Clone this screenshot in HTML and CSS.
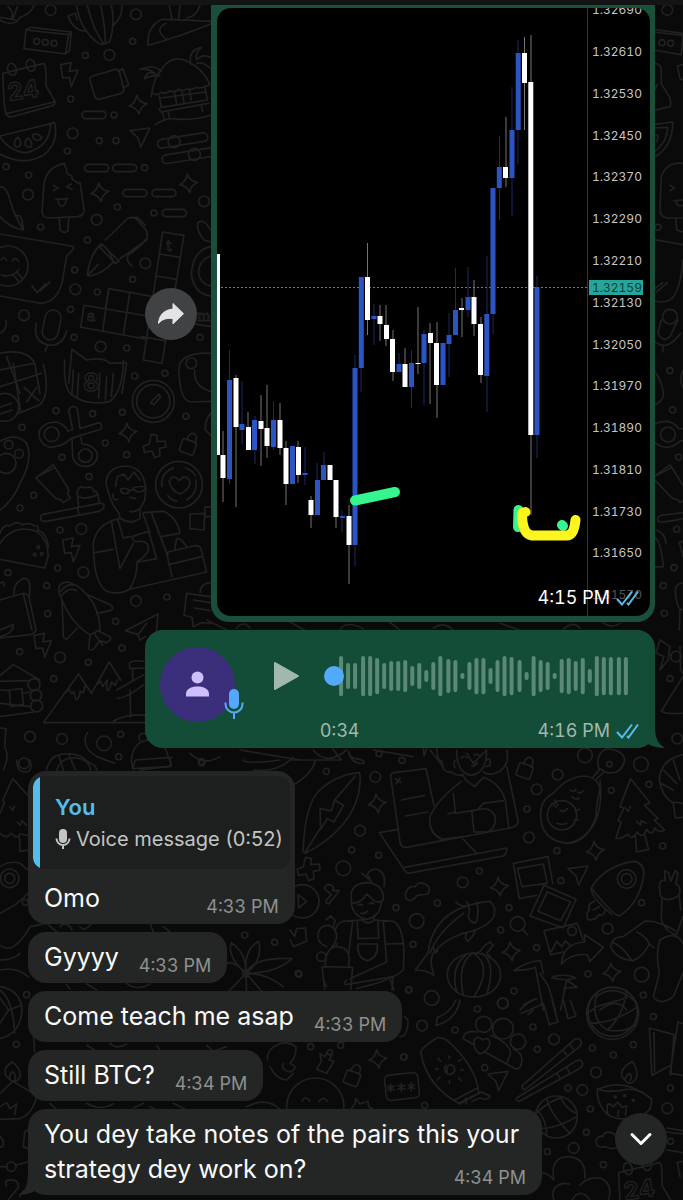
FILE: index.html
```html
<!DOCTYPE html>
<html lang="en">
<head>
    <meta charset="UTF-8">
    <meta name="viewport" content="width=device-width, initial-scale=1">
    <title>Chat</title>
    <link rel="stylesheet" href="styles.css">
</head>
<body>
    <div class="chat">
        <svg class="wallpaper" viewBox="0 0 683 1200" preserveAspectRatio="xMidYMin slice" aria-hidden="true">
            <defs>
                <path id="bolt" d="M-24 -30L8 -36L2 -10L28 -14L8 36L2 8L-18 10Z"/>
                <path id="star" d="M-4 -28Q2 -6 27 -3Q6 6 3 28Q-4 8 -27 4Q-8 -4 -4 -28Z"/>
                <path id="cross" d="M-10 -34L8 -30L6 -12L32 -14L34 4L14 8L16 30L0 36L-8 16L-30 20L-34 2L-16 -6Z"/>
                <path id="send" d="M-28 -24L32 -32L4 26L-4 -2Z"/>
                <g id="lock"><rect x="-24" y="-14" width="44" height="40" rx="6" transform="rotate(20)"/><path d="M-8 -16Q2 -44 18 -32Q26 -26 16 -6"/></g>
                <g id="calendar"><path d="M-62 -28L62 -58Q70 -50 68 10L94 54Q98 62 90 68L-40 104Q-54 100 -58 60Z M-54 94L92 58"/><ellipse cx="-34" cy="-40" rx="13" ry="18" transform="rotate(-15 -34 -40)"/><ellipse cx="22" cy="-52" rx="13" ry="18" transform="rotate(-15 22 -52)"/><text x="-50" y="48" transform="rotate(-8)" class="doodle-num">24</text></g>
                <g id="toothpaste"><path d="M-52 -26L0 -66L44 4Q48 14 42 22L52 34L30 48L22 38Q10 40 4 32Z M-44 -32L6 -58"/></g>
                <path id="ring" d="M-16 0A16 16 0 1 0 16 0A16 16 0 1 0 -16 0"/>
                <path id="dot" d="M-9 0A9 9 0 1 0 9 0A9 9 0 1 0 -9 0"/>
            </defs>

            <!-- top left -->
            <g transform="scale(.3333)">
                <path d="M0 60Q20 76 50 66L60 52Q90 44 102 16M0 52L48 60M24 20Q44 40 34 56M52 20L40 54"/>
                <path d="M230 16Q240 90 296 130Q310 138 330 124Q346 70 334 16M262 16Q280 90 310 130M302 16Q316 80 316 128M204 48Q220 90 254 94M204 48L226 40L232 60M340 76Q368 50 366 16"/>
                <path d="M444 136Q440 80 486 58Q560 60 632 64M444 136Q540 110 632 72M498 70Q460 90 500 118M508 16L516 58M540 16L536 56M600 16Q590 50 560 54"/>
                <path d="M78 90L206 104L196 162L72 146Z M78 90L94 82L214 96L206 104M214 96L208 152L196 162"/>
                <use href="#calendar" x="70" y="248"/>
                <use href="#bolt" x="206" y="224"/>
                <path d="M270 240Q266 232 278 228L346 208Q354 206 358 214L372 270Q370 278 364 280L296 298Q286 296 284 288Z M354 214L368 206L386 254L372 264"/>
                <path d="M454 290Q460 220 510 182Q540 170 566 186Q612 210 630 254M456 278Q470 290 484 276Q498 284 510 272Q524 280 536 268Q548 276 562 266Q576 272 588 262Q600 268 626 256M478 288L484 322L622 300L614 258M478 326L482 336L626 310M524 280L530 310M546 276L552 306M568 270L574 300M484 294L616 276M488 338L492 356M504 334L508 352M604 318L608 334M466 374Q500 350 540 358Q590 360 632 346"/>
                <path d="M484 214Q460 190 420 208Q450 204 466 222Q440 210 434 236Q450 226 480 226M572 192Q564 150 604 142Q584 160 590 180Q606 160 632 172M590 190Q610 184 632 206"/>
                <path d="M0 408L164 368Q178 430 130 466Q70 500 0 462M0 410Q30 456 80 458Q150 440 152 372M44 438Q40 420 54 412Q66 426 60 438Q50 444 44 438Z M76 436Q74 420 84 414Q98 426 94 440Q84 446 76 436Z M98 404Q112 396 126 414Q116 424 108 420Q98 416 98 404Z"/>
                <rect x="246" y="334" width="72" height="22" rx="11"/>
                <rect x="254" y="493" width="72" height="22" rx="11"/>
                <rect x="338" y="493" width="72" height="22" rx="11"/>
                <rect x="369" y="568" width="72" height="22" rx="11"/>
                <rect x="456" y="568" width="72" height="22" rx="11"/>
                <rect x="487" y="628" width="72" height="22" rx="11"/>
                <g transform="rotate(-9 550 420)"><rect x="472" y="408" width="152" height="26" rx="13"/><circle cx="522" cy="421" r="18"/><rect x="478" y="456" width="160" height="26" rx="13"/><circle cx="576" cy="468" r="18"/></g>
                <use href="#star" x="414" y="314"/><use href="#star" x="300" y="577"/><use href="#star" x="566" y="550"/>
                <use href="#send" x="418" y="416"/>
                <path d="M194 490Q140 500 132 552L126 636Q128 654 148 654L234 650Q254 646 252 628L240 548Q230 550 226 544Q214 540 216 528Q196 524 200 506Q192 498 194 490Z M178 656L180 690Q192 704 204 692L206 654M160 556L174 564L160 572M214 552L200 560L216 568M168 598L204 596M174 600Q176 620 188 618Q198 616 198 598"/>
                <path d="M0 560Q20 560 30 600Q40 640 70 690Q30 684 0 650M46 650Q60 640 66 660L70 690"/>
                <path d="M0 702L214 738Q228 742 214 754L200 768L186 850Q168 910 120 910L0 888"/>
                <circle cx="24" cy="798" r="60"/>
                <path d="M4 780Q10 764 20 782M36 784Q44 768 56 784M4 824Q30 836 56 810M40 826L56 844M50 816L68 836M96 858L112 878L136 852M122 872L150 846"/>
                <path d="M262 826Q270 760 304 732Q330 750 340 786Q310 820 270 828Z M264 826L294 794M304 732L358 784L346 790L300 742Z M316 720L384 654Q400 648 410 658L438 690Q444 704 440 720L360 776M390 654L412 652L436 676M440 716Q410 750 384 766Q378 786 396 798"/>
                <path d="M488 696L552 706L520 900M488 696L430 1080L486 1090L500 1000M478 762L542 772M468 828L530 838M252 916L632 980M244 982L440 1018M252 916L242 982M326 866L308 994M326 866L460 890M390 876L370 1004M326 866L316 928M424 1010L496 1022"/>
                <text x="498" y="752" class="doodle-letter">t</text><text x="260" y="964" class="doodle-letter">a</text><text x="590" y="962" class="doodle-letter">m</text>
                <path d="M632 690Q612 654 594 668Q588 690 612 720L632 726M632 740Q580 750 574 820Q580 880 632 888M632 768Q596 780 596 820Q600 850 632 858"/>
                <g transform="rotate(12 156 970)"><rect x="132" y="930" width="48" height="90" rx="24"/><path d="M110 980Q110 1034 156 1036Q200 1034 204 984M156 1036L154 1056"/></g>
                <path d="M0 1000Q22 990 18 962M0 1060Q80 1044 104 1090L120 1180M20 1070L60 1180M0 1110L104 1090M216 1048L260 1080Q310 1070 330 1090L380 1088L366 1180M216 1048L206 1150"/>
                <path d="M540 1090Q560 1056 632 1060M540 1090L536 1110"/>
                <use href="#ring" x="152" y="30"/><use href="#ring" x="408" y="43"/><use href="#ring" x="328" y="165"/><use href="#ring" x="218" y="400"/><use href="#ring" x="84" y="584"/><use href="#ring" x="290" y="659"/><use href="#ring" x="612" y="604"/><use href="#ring" x="436" y="790"/><use href="#ring" x="226" y="868"/><use href="#ring" x="72" y="946"/><use href="#ring" x="302" y="1040"/><use href="#ring" x="574" y="1090"/>
                <use href="#dot" x="256" y="166"/><use href="#dot" x="398" y="124"/><use href="#dot" x="212" y="297"/><use href="#dot" x="342" y="345"/><use href="#dot" x="298" y="422"/><use href="#dot" x="348" y="422"/><use href="#dot" x="202" y="453"/><use href="#dot" x="18" y="500"/><use href="#dot" x="86" y="525"/><use href="#dot" x="434" y="503"/><use href="#dot" x="352" y="621"/><use href="#dot" x="462" y="639"/><use href="#dot" x="122" y="681"/><use href="#dot" x="262" y="720"/><use href="#dot" x="224" y="810"/><use href="#dot" x="398" y="838"/><use href="#dot" x="292" y="876"/><use href="#dot" x="212" y="928"/><use href="#dot" x="46" y="1016"/><use href="#dot" x="222" y="1012"/><use href="#dot" x="380" y="1044"/><use href="#dot" x="600" y="1012"/><use href="#dot" x="110" y="124"/><use href="#dot" x="136" y="127"/><use href="#dot" x="162" y="130"/>
            </g>

            <!-- middle left -->
            <g transform="translate(0 370) scale(.3333)">
                <path d="M0 50L124 10M40 -20L62 128M130 -16Q152 70 120 104L50 132M72 52L116 92M110 52L80 96"/><circle cx="14" cy="112" r="42"/><path d="M0 112L34 100M0 132L36 120"/>
                <path d="M194 -30Q190 50 212 72Q260 110 330 94Q370 60 370 -30M220 0L216 70M236 10L232 80M300 10L296 84M320 20L316 90M340 10L334 80"/>
                <text x="250" y="62" class="doodle-num">8</text>
                <circle cx="460" cy="94" r="63"/><circle cx="460" cy="94" r="50"/><path d="M452 98L476 72L482 80L462 104Z"/>
                <path d="M536 0Q540 90 570 96L632 94M584 0Q580 50 632 64M632 130Q614 150 616 180L632 196"/>
                <path d="M206 120Q218 100 232 116L240 176L296 158Q310 162 302 178L212 206Q190 230 150 232Q114 222 118 184Q130 156 170 156Q196 164 204 184L218 178Z M216 206L218 262Q226 290 260 290Q294 284 292 250Q280 224 246 222L242 196"/>
                <circle cx="155" cy="193" r="22"/><circle cx="256" cy="257" r="20"/>
                <use href="#star" x="384" y="187"/><use href="#cross" x="464" y="227"/><use href="#lock" x="568" y="226"/>
                <path d="M0 214Q50 186 80 220Q100 270 60 340Q40 390 0 420"/><circle cx="18" cy="280" r="30"/><circle cx="26" cy="224" r="13"/><circle cx="57" cy="251" r="13"/>
                <use href="#toothpaste" x="160" y="350"/>
                <path d="M126 434L298 400Q314 398 312 410Q310 420 298 424L138 454Q120 456 122 442Z M232 412L236 430M236 410L232 372Q230 354 246 350L254 354Q280 346 282 364Q292 364 294 374L298 400M236 380Q260 390 292 374"/>
                <path d="M318 340Q322 290 376 288Q420 290 432 330L438 354L434 390Q420 430 390 424M318 340Q330 400 358 430L360 444Q390 466 420 446L420 420M346 350L352 320L372 312L384 330L402 306L420 330M340 372Q334 380 346 390L354 388M362 358Q378 350 388 362Q384 374 370 370Q362 368 362 358Z M400 354Q424 346 438 352Q432 366 414 366Q402 364 400 354Z M388 362L400 358M390 382L406 386"/>
                <path d="M358 446Q290 460 280 520Q280 640 320 664Q360 676 388 658L620 606L604 540Q600 524 580 528L504 546Q500 556 504 568L516 620M284 548L340 538M334 454L360 596L400 520M354 450L370 504L390 500M428 430L450 490M454 428L504 560M430 428L490 424Q530 440 540 490L484 500M396 500L446 484L470 566L416 576M396 500Q400 520 420 514Q450 514 444 544Q430 566 412 574Q410 630 388 658M506 584L606 560M524 540L530 506Q540 500 560 530"/>
                <circle cx="537" cy="344" r="70"/><path d="M508 332Q520 310 538 332Q556 308 570 334Q570 360 540 372Q510 360 508 332Z M486 350Q480 310 520 294M588 330Q594 370 560 390M504 376Q510 388 530 394M556 294Q580 302 586 318"/>
                <path d="M0 520Q40 460 110 484Q146 510 144 560L134 594L0 568M0 490Q10 460 30 468Q50 450 66 464Q90 456 104 468Q116 464 114 480Q140 490 146 530"/><circle cx="104" cy="554" r="4"/><circle cx="115" cy="532" r="4"/><circle cx="125" cy="552" r="4"/>
                <use href="#bolt" x="212" y="540"/><use href="#bolt" x="126" y="826"/>
                <path d="M570 432L614 430L612 480L570 476Z M616 440L614 412L632 410M614 440L632 440"/>
                <path d="M178 670Q170 636 206 636Q250 650 280 700Q300 740 300 780L270 794Q210 760 178 670Z M182 664Q200 640 218 646M186 676Q206 650 230 662M258 672L334 706Q344 716 330 722L290 730M186 690L190 800Q196 812 204 804L232 774M270 794L266 836Q270 844 282 836L298 812M282 790L308 826M294 782L332 802Q334 812 318 818L298 812"/>
                <path d="M0 690L70 670L86 676L108 780Q106 790 90 794L0 804M70 672L96 780M42 672Q40 640 68 626Q96 620 88 680M0 640Q14 630 12 650M0 780L40 764Q40 790 0 800"/>
                <path d="M560 670L632 680M560 670L552 736L576 742L580 770L604 758L632 760M580 690L632 698M582 714L632 722M600 668Q602 640 632 638"/>
                <path d="M376 782L474 732L466 820M376 782L414 794L440 760M414 794L420 810L436 800"/>
                <path d="M0 916L40 884L120 930M0 934L90 932M0 960L28 962M28 960L66 956L70 1004L32 1010Z M0 1000L90 1010M0 1040L100 1026M66 970L92 966"/><circle cx="102" cy="944" r="18"/><circle cx="108" cy="976" r="17"/><circle cx="110" cy="1008" r="18"/>
                <path d="M130 1058L236 912L274 970L328 876L362 930M192 972Q200 964 208 958Q214 980 222 964Q226 990 230 990Q240 980 240 964L250 968L256 946M290 944L302 934L308 950L322 930Q318 960 322 962Q330 960 334 936L346 946L352 930M130 1058L440 1058M340 1054Q380 1030 440 1036M350 960L432 914M352 984Q370 990 432 944M388 880Q394 870 432 874M388 880L390 896L432 894M398 898L398 930M390 960L392 1040"/>
                <path d="M0 1074L18 1076L14 1130Q30 1160 10 1200M140 1200Q150 1150 200 1152Q260 1150 272 1200M176 1156L190 1200M206 1152L226 1200M262 1088Q240 1130 290 1160L344 1180M394 1170Q400 1110 450 1110Q500 1120 504 1160L512 1176L510 1190L398 1196Z M420 1110Q410 1090 434 1090Q450 1096 440 1110"/>
                <use href="#ring" x="244" y="477"/><use href="#ring" x="250" y="607"/><use href="#ring" x="408" y="693"/><use href="#ring" x="180" y="862"/><use href="#ring" x="90" y="1100"/><use href="#ring" x="186" y="1107"/><use href="#ring" x="72" y="1180"/><circle cx="312" cy="1120" r="22"/>
                <use href="#dot" x="404" y="18"/><use href="#dot" x="495" y="10"/><use href="#dot" x="168" y="122"/><use href="#dot" x="278" y="131"/><use href="#dot" x="367" y="127"/><use href="#dot" x="558" y="139"/><use href="#dot" x="66" y="172"/><use href="#dot" x="316" y="219"/><use href="#dot" x="380" y="254"/><use href="#dot" x="186" y="262"/><use href="#dot" x="267" y="320"/><use href="#dot" x="101" y="376"/><use href="#dot" x="60" y="414"/><use href="#dot" x="180" y="480"/><use href="#dot" x="173" y="594"/><use href="#dot" x="24" y="608"/><use href="#dot" x="140" y="647"/><use href="#dot" x="501" y="681"/><use href="#dot" x="143" y="731"/><use href="#dot" x="347" y="754"/><use href="#dot" x="366" y="834"/><use href="#dot" x="59" y="845"/><use href="#dot" x="265" y="877"/><use href="#dot" x="161" y="926"/><use href="#dot" x="362" y="1093"/><use href="#dot" x="356" y="1160"/><use href="#dot" x="605" y="1175"/>
            </g>

            <!-- right edge -->
            <g transform="translate(440 0) scale(.3333)">
                <use href="#ring" x="682" y="30"/>
                <path d="M640 88L729 100M640 96L729 106M640 150L724 164L729 104"/>
                <use href="#dot" x="666" y="128"/><use href="#dot" x="692" y="130"/>
                <path d="M640 190Q664 190 664 210L664 252L688 290Q696 310 690 320L640 332M652 254L640 276M729 194L712 198L720 236L729 240M640 374L698 366Q700 440 640 474M640 384L684 382Q680 430 640 458M640 404Q660 400 650 426"/>
                <path d="M729 490Q680 484 664 530L660 630Q660 652 684 654L729 654M708 656L710 690L729 696M690 556L704 564L690 572M702 602L729 600M708 606Q712 622 729 616M640 718L729 734M729 780Q720 880 690 900Q660 912 640 900M640 870L668 848M650 876L682 848"/>
                <use href="#dot" x="654" y="682"/><circle cx="690" cy="950" r="22"/>
                <g transform="translate(0 960)">
                    <path d="M664 0L654 40Q670 70 690 50L714 0M640 60Q680 100 722 40M670 78L668 96M640 148Q672 190 670 230Q660 250 640 256"/>
                    <use href="#dot" x="690" y="152"/><use href="#dot" x="698" y="270"/><use href="#dot" x="716" y="412"/><use href="#dot" x="710" y="628"/><use href="#dot" x="702" y="743"/><use href="#dot" x="670" y="797"/><use href="#dot" x="673" y="880"/>
                    <circle cx="684" cy="344" r="22"/><path d="M640 314Q690 290 716 326L729 326M640 364Q680 400 720 364L729 362M729 152Q716 180 729 204"/>
                    <use href="#toothpaste" x="690" y="500"/>
                    <path d="M729 578L664 586Q650 590 654 604Q660 610 729 596M640 650Q664 660 670 740L640 742M650 630Q676 640 678 670M729 664L718 668L729 710M729 790Q700 790 708 830Q712 870 729 870M720 870L718 930"/>
                    <path d="M648 1000L672 1010L660 1050L684 1020L690 980L660 960Z M664 1174L729 1070M664 1174Q680 1184 729 1180M720 980L722 1050L729 1060"/>
                    <use href="#ring" x="708" y="1010"/><use href="#dot" x="690" y="1076"/><use href="#ring" x="712" y="1256"/>
                </g>
            </g>

            <!-- slivers between the bubbles -->
            <g transform="translate(200 600) scale(.3333)">
                <path d="M20 60L80 90M110 84Q130 60 150 84M260 60L330 100M420 88Q440 60 490 86M560 60L600 90M700 84Q730 62 760 90M900 70L960 90M1090 88Q1120 60 1140 84M1200 60Q1230 90 1260 70"/>
                <path d="M-30 460Q10 500 60 470M120 450L300 480M340 450Q380 500 440 450M520 450L640 470M690 450L730 500M800 460L820 490L860 450"/>
            </g>

            <!-- lower right -->
            <g transform="translate(290 740) scale(.3333)">
                <path d="M0 60L154 60L128 26M0 140Q60 110 76 64M176 34Q180 56 200 56Q224 60 222 70Q190 74 178 44Z M400 20L402 48L410 26"/>
                <path d="M208 98Q214 110 206 160Q180 270 46 340Q36 336 40 320Q46 190 90 150Q140 104 208 98Z M46 336L90 266M134 180L196 108M90 206L124 212L134 180L160 196L132 246L112 236L92 268Z"/>
                <path d="M302 110Q300 100 312 98L408 86M302 110L330 306Q334 324 350 322L660 264Q688 258 684 240L650 80M408 86L432 196M316 116L332 128M330 114L318 132M334 180L404 166M346 228L414 216M326 268L268 278L346 394Q352 402 366 398L640 348Q652 340 650 324L344 382M520 298L558 338"/>
                <path d="M500 30Q500 100 544 106Q590 100 590 30M440 26Q440 60 456 64Q456 100 484 96Q500 110 520 104M590 60Q604 50 600 76L588 80M500 60Q488 60 494 82M650 30Q660 70 630 94Q600 110 580 96M514 54Q522 44 532 54M552 46Q562 38 570 50M544 78Q556 80 562 68M520 108L530 122L554 140L580 112M514 124Q440 180 420 230Q414 280 456 298L520 290M490 160L496 216L474 222M496 220L570 208Q600 200 616 230Q618 270 590 276L552 276L546 216M580 112Q630 130 646 180L656 262M562 210L580 190L640 182"/>
                <use href="#star" x="262" y="190"/><use href="#star" x="916" y="332"/><use href="#star" x="628" y="440"/><use href="#star" x="664" y="634" /><use href="#star" x="966" y="697"/>
                <use href="#lock" x="708" y="88"/><use href="#cross" x="56" y="386"/><use href="#send" x="862" y="410"/>
                <path d="M752 220Q752 180 790 160Q830 112 880 108Q926 110 930 150Q920 180 918 230Q890 310 830 310Q750 300 752 220Z M930 120Q940 220 900 270Q870 306 830 310M910 110L930 88M920 116L940 98M926 84Q916 40 950 26Q1000 30 1004 60Q996 104 950 98Z M840 150Q850 160 858 148M864 156Q872 164 880 152M846 170Q856 182 868 174M784 190L800 202M794 180L804 196M856 214L868 208M852 240L866 240"/><circle cx="816" cy="226" r="44"/><path d="M810 210Q820 220 832 206M800 250Q816 256 830 250"/><circle cx="958" cy="73" r="8"/>
                <path d="M1022 116L1080 188L1064 196L1104 236L1092 240L1124 270Q1106 280 1094 264Q1086 292 1070 268Q1058 300 1042 276Q1024 304 1014 282Q990 300 978 294L994 246L984 242L1002 204L990 200Z M1036 288L1040 336L1076 328L1064 284M1006 204L1014 214L1022 200M1040 244L1052 256L1054 242L1068 250"/>
                <path d="M1179 44Q1110 60 1108 120Q1116 170 1150 190L1156 234L1179 232M1120 90L1160 130M1112 130L1150 150M1150 60L1170 120M1152 186L1179 190"/>
                <path d="M670 370L774 350L788 430M670 370L688 476L740 466M682 386L760 372L772 430L696 440Z M762 436L858 478L820 564L720 528Z M772 456L842 486L812 542L744 514Z M762 572L862 550L880 600M762 572L782 644L820 636M784 634L800 604L816 620L826 602L840 616"/><circle cx="846" cy="573" r="13"/>
                <path d="M814 672Q820 610 884 606L884 584L940 622L900 664L892 644Q840 640 814 672Z"/>
                <path d="M904 444Q940 380 1030 364Q1060 366 1062 400Q1050 490 988 528Q970 526 904 444Z M904 444Q900 470 966 524M914 484Q890 490 898 510Q886 520 894 540Q920 540 926 524Q944 530 946 506M910 510L928 500"/><circle cx="1010" cy="417" r="28"/><circle cx="1010" cy="417" r="16"/>
                <path d="M1108 440Q1110 416 1126 422L1124 392L1136 398L1142 424L1156 392L1164 400L1158 432Q1174 440 1168 464Q1140 490 1112 470ZM1116 476L1114 540Q1130 580 1160 584L1179 530M1168 470L1172 510M962 620Q966 590 1000 590L1064 544Q1100 540 1156 572M962 620Q980 660 1030 662Q1060 650 1078 612L1092 624M966 606Q1000 620 1024 660M1040 576Q1070 590 1078 612M1110 600Q1160 570 1179 610M1110 600Q1096 640 1108 700L1090 770Q1110 800 1150 770Q1170 720 1179 700"/>
                <path d="M184 460Q188 430 232 428Q282 432 280 480Q270 490 254 484L230 462Q216 490 184 490Z M184 490Q190 530 230 538Q270 530 274 488M232 404Q240 386 262 388Q290 400 282 440M232 404L244 424L216 400M204 496Q210 490 218 496M238 492Q246 486 252 492M212 520Q222 524 232 514M216 538Q230 556 250 544L252 532"/>
                <path d="M216 540L160 544Q140 550 136 570M188 544L176 640M202 544L204 596L266 594L264 540M254 540L310 544Q340 560 342 640L340 690Q320 710 260 730L200 746M280 544L290 666L180 716M204 612L262 612Q266 650 234 662Q200 656 204 612Z M290 612L342 610M96 680L188 682L182 748M96 680L104 748M106 682Q104 624 140 620Q176 620 178 660L176 680M136 620L142 610M110 620Q80 610 84 580Q90 556 116 556Q140 566 140 590Q138 610 126 620M108 540L122 528L136 542L130 558M300 716L312 750"/><circle cx="94" cy="650" r="14"/>
                <path d="M346 464Q352 436 376 440Q384 422 404 432Q426 440 414 462L382 466Q366 490 348 476Z M104 446Q106 432 120 434Q136 440 128 452L148 452L116 492Q104 490 110 480L124 464Z"/>
                <path d="M376 690L414 640Q430 500 600 484Q620 500 612 530Q590 566 520 580Q460 600 430 640Q416 660 432 706Q410 690 376 690ZM530 484Q544 510 534 530Q548 556 560 544Q568 510 560 486M528 580Q524 600 534 604Q550 590 556 570M498 486Q510 500 528 498M420 640Q440 580 520 520M430 620Q434 650 444 630"/>
                <ellipse cx="552" cy="705" rx="80" ry="66"/><path d="M548 640Q500 670 520 766M552 640Q610 680 552 770M530 642Q480 680 500 756M576 640Q620 670 590 764M556 640Q570 640 580 620L600 606L610 616L590 640Q604 650 600 656"/>
                <path d="M672 692Q710 664 752 662L760 700M672 692Q720 690 736 682L760 810M750 700L776 740L796 810M784 714L830 720L812 810M790 710Q830 700 858 714L830 720L862 742L820 744M690 810Q720 780 740 776"/>
                <circle cx="968" cy="815" r="74"/><path d="M920 770Q970 730 1030 780M930 810Q980 770 1010 810"/>
                <circle cx="37" cy="484" r="50"/><path d="M24 464L50 484L26 504Z M0 570L14 590L20 566L46 564L50 604L10 620L0 600"/>
                <circle cx="683" cy="552" r="22"/><path d="M698 568L712 584"/><circle cx="380" cy="543" r="22"/><circle cx="160" cy="385" r="22"/><circle cx="425" cy="774" r="22"/><circle cx="885" cy="46" r="22"/><circle cx="1053" cy="73" r="22"/><circle cx="1055" cy="704" r="22"/>
                <use href="#ring" x="256" y="111"/><use href="#ring" x="803" y="104"/><use href="#ring" x="740" y="148"/><use href="#ring" x="210" y="272"/><use href="#ring" x="717" y="292"/><use href="#ring" x="518" y="427"/><use href="#ring" x="953" y="566"/><use href="#ring" x="638" y="790"/>
                <use href="#dot" x="267" y="41"/><use href="#dot" x="336" y="61"/><use href="#dot" x="109" y="94"/><use href="#dot" x="964" y="151"/><use href="#dot" x="1077" y="133"/><use href="#dot" x="711" y="207"/><use href="#dot" x="185" y="330"/><use href="#dot" x="266" y="346"/><use href="#dot" x="801" y="332"/><use href="#dot" x="1118" y="318"/><use href="#dot" x="568" y="393"/><use href="#dot" x="813" y="422"/><use href="#dot" x="442" y="489"/><use href="#dot" x="318" y="503"/><use href="#dot" x="657" y="503"/><use href="#dot" x="1055" y="488"/><use href="#dot" x="632" y="570"/><use href="#dot" x="369" y="613"/><use href="#dot" x="740" y="623"/><use href="#dot" x="894" y="702"/><use href="#dot" x="357" y="749"/><use href="#dot" x="672" y="753"/><use href="#dot" x="1060" y="765"/><use href="#dot" x="27" y="703"/>
            </g>

            <!-- bottom right -->
            <g transform="translate(400 1000) scale(.3333)">
                <path d="M108 76Q170 60 180 0M108 76L112 52Q150 40 168 0M370 14L400 0M364 40L410 20L430 10L448 74L474 66L456 0M384 44L400 30M490 0L504 56L528 48L510 0"/>
                <circle cx="638" cy="40" r="78"/><path d="M590 -20Q570 60 622 90Q670 50 680 -30M562 40L590 20L680 -6M570 70Q640 70 714 20M622 90Q680 100 710 70"/>
                <path d="M62 156Q64 144 110 114Q124 110 140 120Q230 200 236 280L180 312Q80 260 62 156ZM164 300L232 264M176 310L244 276L270 288Q264 304 240 294L216 304M200 312L196 296"/><path d="M142 216Q136 200 150 194Q166 196 164 212Q158 226 142 222Q126 206 138 196M148 176L148 168M176 184L184 178M182 210L190 210M176 234L184 242M148 242L148 250M120 232L112 240M114 208L106 206M122 184L114 176"/>
                <circle cx="251" cy="73" r="24"/><circle cx="309" cy="86" r="31"/><circle cx="354" cy="125" r="23"/><path d="M190 116Q190 96 216 94L234 96M190 116L222 134M272 106Q330 130 332 160L320 192M254 156L346 206Q360 210 364 192Q372 160 340 148M222 120Q236 104 246 120Q266 108 270 130Q266 152 240 162Q220 150 222 120Z"/>
                <path d="M366 258L524 118Q540 112 544 126Q546 134 536 142L376 268Q366 270 366 258ZM488 150L500 164M508 132L520 148M350 294L530 182Q544 176 548 190Q548 200 538 206L358 304Q346 304 350 294ZM470 220L480 234M500 202L508 218"/>
                <use href="#send" x="292" y="246"/>
                <rect x="-44" y="222" width="100" height="76" rx="14" transform="rotate(-6 0 260)"/><path d="M-28 252V276M-38 258L-18 270M-18 258L-38 270M4 250V274M-6 256L14 268M14 256L-6 268M34 248V272M24 254L44 266M44 254L24 266"/>
                <circle cx="469" cy="351" r="63"/><path d="M408 340Q450 300 490 292M420 384Q460 390 530 350M440 296Q450 340 510 400M412 330Q440 360 440 406M480 290Q500 330 530 340"/>
                <path d="M592 270Q670 230 754 296Q760 340 710 350Q640 370 610 330Q590 300 592 270ZM592 266Q620 280 680 268Q720 266 752 296M686 250Q656 230 668 210Q676 196 698 184Q718 220 708 236Q700 250 686 250ZM676 238Q676 228 688 220Q698 230 690 242M624 344Q616 310 630 312L640 320L654 306L666 322L680 318L676 346M654 348L656 330"/><circle cx="646" cy="291" r="3"/><circle cx="674" cy="287" r="3"/><circle cx="700" cy="301" r="3"/>
                <path d="M748 84L822 104L812 226M748 84L756 226L812 196M762 98L764 214M849 70L834 66L810 220L849 226"/>
                <path d="M588 426Q590 406 608 410Q614 392 634 398Q648 402 648 414M588 426Q590 446 616 440Q636 452 654 440M800 384L849 392M800 396L849 402M800 450L849 458M849 484L832 488L840 530"/>
                <use href="#dot" x="812" y="424"/>
                <path d="M400 520Q440 510 462 540M462 540Q448 470 508 470Q560 476 554 534M462 600Q448 560 490 550L508 552M540 556Q560 530 600 534Q640 550 626 600M516 600Q540 560 570 600"/>
                <use href="#calendar" x="718" y="546"/>
                <path d="M0 110Q24 110 24 60L14 50"/>
                <use href="#ring" x="66" y="77"/><use href="#ring" x="462" y="118"/><use href="#ring" x="588" y="217"/><use href="#ring" x="547" y="270"/><use href="#ring" x="802" y="325"/><use href="#ring" x="521" y="444"/><use href="#ring" x="309" y="10"/>
                <use href="#dot" x="232" y="27"/><use href="#dot" x="165" y="90"/><use href="#dot" x="399" y="81"/><use href="#dot" x="412" y="148"/><use href="#dot" x="577" y="144"/><use href="#dot" x="640" y="165"/><use href="#dot" x="700" y="134"/><use href="#dot" x="760" y="50"/><use href="#dot" x="12" y="171"/><use href="#dot" x="254" y="203"/><use href="#dot" x="504" y="264"/><use href="#dot" x="811" y="264"/><use href="#dot" x="571" y="327"/><use href="#dot" x="74" y="316"/><use href="#dot" x="559" y="397"/><use href="#dot" x="442" y="455"/><use href="#dot" x="610" y="494"/>
            </g>

            <!-- lower left -->
            <g transform="translate(0 760) scale(.3333)">
                <path d="M50 0Q50 40 80 36Q100 30 90 0M170 34Q180 -10 230 -6Q290 10 290 30M400 20L406 0L516 -8M420 30L514 18L510 -6M730 0Q740 14 840 0M760 30Q830 40 880 -8"/>
                <path d="M84 106L38 56L8 120L14 126L0 160M30 140L38 152L44 138M52 186L60 196L66 182L80 196M0 220Q20 240 34 220Q50 240 60 222L84 226M58 230L60 274L84 270M0 320Q30 300 60 310L84 330M0 460Q60 430 84 400"/>
                <circle cx="29" cy="355" r="28"/><circle cx="29" cy="355" r="15"/><use href="#dot" x="76" y="427"/>
                <path d="M0 556Q20 570 40 560Q70 540 90 500L140 490L170 516M0 600Q40 600 60 580M0 630Q50 620 84 650M180 500Q200 480 216 510M240 500Q250 520 276 490M450 490L460 516M490 500L510 516"/>
                <path d="M738 640Q680 590 694 548Q740 580 738 640ZM738 640Q730 570 776 544Q790 600 738 640ZM738 640Q760 590 876 596Q830 640 738 640ZM738 640Q700 600 680 610M738 640Q800 640 850 680M738 640L680 700M738 640L740 710M738 640L790 700"/><circle cx="738" cy="640" r="10"/>
                <use href="#dot" x="734" y="525"/><use href="#dot" x="824" y="547"/><use href="#dot" x="895" y="641"/><use href="#dot" x="605" y="8"/>
                <g transform="translate(0 660)">
                    <path d="M0 20Q60 30 66 86Q64 160 0 176M0 54L26 90L0 130M26 90L64 76M0 30Q40 60 44 160"/><use href="#dot" x="80" y="44"/><use href="#dot" x="49" y="193"/>
                    <path d="M100 160L104 216M38 304Q10 290 16 268Q22 254 38 246Q68 274 58 294Q50 306 38 304ZM30 300Q26 284 38 274Q50 286 44 302M0 340L38 304L110 346Q100 400 60 416L0 418M0 380L20 368L30 386L50 372L44 404M84 450L74 456L70 500L84 506M0 470Q14 480 8 500L0 502M0 560L20 560M46 556L84 546M20 620Q10 600 30 600Q60 600 54 624L24 660M60 650Q70 626 90 630"/>
                    <circle cx="34" cy="560" r="14"/>
                    <path d="M200 14L210 28M260 12L290 30M380 10Q410 34 450 12M260 196L290 214M330 190Q350 210 380 192M470 196L480 210M620 196L640 214L680 200M150 370L170 390M260 370Q300 394 340 372M400 384L430 370M450 380L470 390M520 370L560 390M740 380Q800 350 840 388"/>
                    <path d="M802 240Q800 210 830 196Q860 180 888 200Q890 230 870 250Q900 262 870 276Q840 270 850 250M810 260Q830 300 860 300L880 280"/>
                    <path d="M960 220L974 230L982 220L994 228L988 240L1002 244L980 280L950 268L964 244ZM976 226Q986 200 998 214L994 228"/>
                    <use href="#lock" x="1060" y="290"/><use href="#star" x="1134" y="237"/><use href="#dot" x="932" y="200"/><use href="#dot" x="1022" y="196"/><use href="#dot" x="1211" y="231"/>
                    <circle cx="946" cy="380" r="86"/><path d="M906 364Q916 344 930 364M956 366Q970 346 982 364"/>
                    <path d="M1068 356L1080 372L1104 364L1106 380L1118 386M1068 356L1064 374L1054 386M970 0L980 20M1040 0Q1020 20 1060 10L1180 -10L1176 30"/>
                    <use href="#dot" x="1226" y="30"/>
                </g>
            </g>
        </svg>

        <main class="messages">
            <div class="row row-out">
                <button class="round-btn" type="button" aria-label="Forward">
                    <svg viewBox="0 0 52 52" width="52" height="52"><path d="M28 15.5V21C18 22 14 28 13.500 35.500C17 31 21.500 30 28 30.500V36L38.500 25.700Z"/></svg>
                </button>
                <div class="bubble out photo">
                    <svg class="chart" viewBox="217 8 433 608" role="img" aria-label="Candlestick chart">
                        <rect x="217" y="8" width="433" height="608" fill="#000"/>
                        <path class="axis" d="M587.500 8V616"/>
                        <path class="level" d="M221 287.500H587"/>

                        <path class="wick wick-down" d="M223 431V502M236 375V507M248 412V450M261 395V466M267 385V458M280 403V455M286 441V505M298 441V483M311 496V528M336 480V528M349 505V584M367.500 243V335M380 305V341M386 305V346M393 330V381M405 348V387M418 307V374M430 323V404M437 322V418M462 298V337M474 280V336M481 317V383M506 117V187M524.500 37V130M531 35V515"/>
                        <path class="wick wick-up" d="M229.500 350V484M242 381V444M255 416V464M273.500 401V450M305 447V485M317 463V480M324 452V465M342 510V532M355 355V566M361 277V392M374 304V345M399 353V364M411.500 350V408M424 330V405M449 313V377M455.500 268V310M468 267V317M487 256V412M493 188V334M499.500 136V220M512 87V216M518 40V164M537 276V458"/>
                        <path class="body-down" d="M217.500 254V455M223 455V478M236 378V427M248.500 427V450M261 421V429M267 428V446M280 420V448M286 448V484M298.500 447V475M311 500V515M330 465V480M336 480V517M349 516V545M367.500 277V320M380 316V324M386.500 325V339M392.500 339V372M405 364V387M418 363V364M430.500 333V343M436.500 343V385M461.500 308V310M474 297V324M480.500 324V375M505.500 167V178M524.500 53V83M530.800 82V435"/>
                        <path class="body-up" d="M229.500 380V479M242 424V430M254.500 420V450M273.500 420V447M292.500 446V484M305 473V475M317.500 480V515M323.500 465V480M342.500 516V518M355 368V545M361.300 277V368M374 316V319M399 364V372M411.500 363V387M424 334V363M443 343V385M449 335V344M455.500 310V335M468 297V310M486.800 314V376M493 188V314M499.300 167V188M512 130V178M518.200 53V130M537 287V435"/>

                        <g class="prices">
                            <text x="592" y="14">1.32690</text>
                            <text x="592" y="56">1.32610</text>
                            <text x="592" y="98">1.32530</text>
                            <text x="592" y="140">1.32450</text>
                            <text x="592" y="181">1.32370</text>
                            <text x="592" y="223">1.32290</text>
                            <text x="592" y="265">1.32210</text>
                            <text x="592" y="307">1.32130</text>
                            <text x="592" y="349">1.32050</text>
                            <text x="592" y="390">1.31970</text>
                            <text x="592" y="432">1.31890</text>
                            <text x="592" y="474">1.31810</text>
                            <text x="592" y="516">1.31730</text>
                            <text x="592" y="557">1.31650</text>
                            <text x="592" y="599" class="faded">1.31570</text>
                        </g>
                        <rect x="589" y="280" width="54" height="15" fill="#26a69a"/>
                        <text x="592" y="292" class="price-now">1.32159</text>

                        <path class="marker green" d="M355 500.500L395 492"/>
                        <path class="marker green" d="M518.500 510L518 527M562 525L563 526"/>
                        <path class="marker yellow" d="M525.500 512L522 513Q522 534 532 535.500H566Q574 536 575.500 520"/>
                    </svg>
                    <div class="meta meta-photo">
                        <time>4:15 PM</time>
                        <svg class="ticks" viewBox="0 0 23 16" width="23" height="16" aria-label="Read"><path d="M1 9L6 14.500L16 1.500M11 13L12.500 14.500L22 1.500"/></svg>
                    </div>
                </div>
            </div>

            <div class="row row-out">
                <div class="bubble out voice">
                    <div class="avatar">
                        <svg viewBox="0 0 75 75" width="75" height="75" aria-hidden="true"><circle cx="37.500" cy="30.500" r="6"/><path d="M26 49.500V47C26 42 31 39.500 37.500 39.500S49 42 49 47V49.500Z"/></svg>
                        <svg class="avatar-mic" viewBox="0 0 20 32" width="20" height="32" aria-hidden="true"><rect x="5" y="1" width="10" height="20" rx="5"/><path d="M1.500 14.500V16A8.500 8.500 0 0 0 18.500 16V14.500M10 24.500V31"/></svg>
                    </div>
                    <div class="voice-main">
                        <div class="player">
                            <button class="play" type="button" aria-label="Play">
                                <svg viewBox="0 0 27 30" width="27" height="30"><path d="M2 2L25 15L2 28Z"/></svg>
                            </button>
                            <div class="wave">
                                <svg viewBox="325 650 304 52" aria-hidden="true">
                                    <path d="M342 658V694M349 665V687M356 665V687M364 658V694M371 658V694M378 660V692M385 665V687M392 663V689M399 663V689M406 662V690M413 668V684M420 665V687M427 672V680M434 664V688M441 658V694M449 661V691M456 662V690M463 675V677M470 664V688M477 660V692M484 660V692M491 670V682M498 662V690M505 658V694M512 659V693M520 662V690M527 674V678M534 658V694M541 662V690M548 664V688M555 675V677M562 661V691M569 660V692M576 663V689M583 660V692M590 671V681M597 658V694M604 659V693M611 659V693M619 659V693M626 659V693"/>
                                </svg>
                                <input class="seek" type="range" min="0" max="34" value="0" aria-label="Seek">
                            </div>
                        </div>
                        <div class="voice-foot">
                            <span>0:34</span>
                            <div class="meta">
                                <time>4:16 PM</time>
                                <svg class="ticks" viewBox="0 0 23 16" width="23" height="16" aria-label="Read"><path d="M1 9L6 14.500L16 1.500M11 13L12.500 14.500L22 1.500"/></svg>
                            </div>
                        </div>
                    </div>
                    <svg class="tail tail-out" viewBox="0 0 26 20" width="26" height="20" aria-hidden="true"><path d="M16 0Q16 15 26 20Q16 20 9 16L0 16V0Z"/></svg>
                </div>
            </div>

            <div class="row row-in row-first">
                <div class="bubble in reply">
                    <div class="quote">
                        <div class="quote-name">You</div>
                        <div class="quote-text">
                            <svg viewBox="0 0 16 22" width="16" height="22" aria-hidden="true"><rect x="4" y="1" width="8" height="14" rx="4"/><path d="M1.500 10.500A6.500 6.500 0 0 0 14.500 10.500M8 17V21"/></svg>
                            Voice message (0:52)
                        </div>
                    </div>
                    <div class="line">
                        <p>Omo</p>
                        <time>4:33 PM</time>
                    </div>
                </div>
            </div>

            <div class="row row-in">
                <div class="bubble in line">
                    <p>Gyyyy</p>
                    <time>4:33 PM</time>
                </div>
            </div>

            <div class="row row-in">
                <div class="bubble in line">
                    <p>Come teach me asap</p>
                    <time>4:33 PM</time>
                </div>
            </div>

            <div class="row row-in">
                <div class="bubble in line">
                    <p>Still BTC?</p>
                    <time>4:34 PM</time>
                </div>
            </div>

            <div class="row row-in">
                <div class="bubble in line line-long">
                    <p>You dey take notes of the pairs this your strategy dey work on?</p>
                    <time>4:34 PM</time>
                    <svg class="tail tail-in" viewBox="0 0 26 20" width="26" height="20" aria-hidden="true"><path d="M10 0Q10 15 0 20Q10 20 17 16L26 16V0Z"/></svg>
                </div>
            </div>
        </main>

        <button class="round-btn to-bottom" type="button" aria-label="Scroll to bottom">
            <svg viewBox="0 0 52 52" width="52" height="52"><path d="M17 21.500L26 30.500L35 21.500"/></svg>
        </button>
    </div>
</body>
</html>
```

FILE: styles.css
```css
* {
    box-sizing: border-box;
}
body {
    margin: 0;
    background: #0a0a0a;
    font-family: Inter, "Liberation Sans", sans-serif;
    color: #fafafa;
}
p {
    margin: 0;
}
button {
    padding: 0;
    border: none;
    background: none;
    cursor: pointer;
}
svg {
    display: block;
}

.chat {
    position: relative;
    min-height: 100vh;
    overflow: hidden;
    border-top: 5px solid #121514;
}
.wallpaper {
    position: absolute;
    top: -5px;
    left: 0;
    width: 100%;
    height: calc(100% + 5px);
    fill: none;
    stroke: #212121;
    stroke-width: 5;
    stroke-linecap: round;
    stroke-linejoin: round;
}
.doodle-num {
    font-size: 72px;
    font-weight: 700;
    stroke-width: 4px;
}
.doodle-letter {
    font-size: 44px;
    font-family: "DejaVu Serif", serif;
    stroke-width: 3px;
}

.messages {
    position: relative;
    display: flex;
    flex-direction: column;
    gap: 8px;
    padding: 0 28px 4px;
}
.row {
    display: flex;
    align-items: center;
}
.row-out {
    justify-content: flex-end;
    gap: 14px;
}
.row-first {
    margin-top: 15px;
}

/* bubbles */
.bubble {
    position: relative;
    border-radius: 18px;
}
.out {
    background: #144d37;
}
.in {
    max-width: 82%;
    background: #232625;
}
.photo {
    width: 71%;
    max-width: 444px;
    padding: 3px 5px 6px 6px;
    border-radius: 0 0 18px 18px;
    background: #1a503b;
}
.tail {
    position: absolute;
    bottom: 0;
}
.tail-out {
    right: -10px;
    fill: #144d37;
}
.tail-in {
    left: -10px;
    fill: #232625;
}

.round-btn {
    flex: none;
    width: 52px;
    height: 52px;
    border-radius: 50%;
    background: #414244;
}
.round-btn path {
    fill: #e4e4e6;
    stroke: #e4e4e6;
    stroke-width: 1;
    stroke-linejoin: round;
}
.to-bottom {
    position: absolute;
    right: 16px;
    bottom: 35px;
    background: #232625;
}
.to-bottom path {
    fill: none;
    stroke: #fff;
    stroke-width: 3;
    stroke-linecap: round;
}

/* chart */
.chart {
    width: 100%;
    height: auto;
    border-radius: 14px;
}
.axis {
    stroke: #333;
}
.level {
    stroke: #43957a;
    stroke-dasharray: 2 2;
}
.wick {
    stroke-width: 1;
}
.wick-down {
    stroke: #77756f;
}
.wick-up {
    stroke: #1d2a66;
}
.body-down {
    stroke: #fff;
    stroke-width: 5;
}
.body-up {
    stroke: #2c55c4;
    stroke-width: 5;
}
.prices {
    fill: #c6c6c6;
    font-size: 12px;
    font-variant-numeric: tabular-nums;
}
.prices .faded {
    fill: #555;
}
.price-now {
    fill: #0b3f3a;
    font-size: 12px;
    font-variant-numeric: tabular-nums;
}
.marker {
    fill: none;
    stroke-width: 10;
    stroke-linecap: round;
    stroke-linejoin: round;
}
.green {
    stroke: #34f58f;
}
.yellow {
    stroke: #fdf51e;
}

/* time and ticks */
time {
    font-size: 18px;
    line-height: 24px;
    font-variant-numeric: tabular-nums;
    white-space: nowrap;
}
.meta {
    display: flex;
    align-items: center;
    gap: 6px;
}
.meta-photo {
    position: absolute;
    right: 16px;
    bottom: 12px;
    color: #fff;
}
.ticks {
    fill: none;
    stroke: #55bdec;
    stroke-width: 2;
}

/* voice message */
.voice {
    display: flex;
    gap: 38px;
    width: 82%;
    max-width: 510px;
    padding: 17px 16px 5px 15px;
}
.avatar {
    position: relative;
    flex: none;
    width: 75px;
    height: 75px;
    border-radius: 50%;
    background: #3b2f7c;
    fill: #cfbffc;
}
.avatar-mic {
    position: absolute;
    right: -9px;
    bottom: 2px;
    fill: #53a9fb;
}
.avatar-mic path {
    fill: none;
    stroke: #53a9fb;
    stroke-width: 2;
}
.voice-main {
    flex: 1;
}
.player {
    display: flex;
    align-items: center;
    gap: 24px;
    height: 58px;
    padding-right: 10px;
}
.play path {
    fill: #a1b8af;
    stroke: #a1b8af;
    stroke-width: 2;
    stroke-linejoin: round;
}
.wave {
    position: relative;
    flex: 1;
}
.wave path {
    fill: none;
    stroke: #5b8975;
    stroke-width: 4;
    stroke-linecap: round;
}
.seek {
    position: absolute;
    top: 0;
    left: 0;
    width: 100%;
    height: 100%;
    margin: 0;
    background: transparent;
    -webkit-appearance: none;
    appearance: none;
}
.seek::-webkit-slider-thumb {
    width: 20px;
    height: 20px;
    border-radius: 50%;
    background: #53a9fb;
    -webkit-appearance: none;
}
.voice-foot {
    display: flex;
    justify-content: space-between;
    margin-top: 14px;
    padding-left: 47px;
    font-size: 18px;
    line-height: 24px;
    color: #a1b8af;
}

/* text messages */
.line {
    display: flex;
    align-items: flex-end;
    justify-content: space-between;
    gap: 20px;
    padding: 8px 16px 5px;
}
.line p {
    margin-bottom: 3px;
    font-size: 25px;
    line-height: 35px;
}
.line time {
    color: #8e9190;
}
.line-long {
    display: grid;
}
.line-long p,
.line-long time {
    grid-area: 1 / 1;
}
.line-long time {
    justify-self: end;
}
.reply {
    padding-top: 5px;
}
.quote {
    margin: 0 5px 4px;
    padding: 17px 7px 12px 22px;
    border-radius: 12px;
    background: linear-gradient(to right, #55bdec 7px, #1d1f1f 7px);
}
.quote-name {
    font-size: 22px;
    line-height: 28px;
    font-weight: 600;
    color: #55bdec;
}
.quote-text {
    display: flex;
    align-items: center;
    gap: 5px;
    font-size: 20px;
    line-height: 36px;
    color: #c3c5c4;
}
.quote-text svg {
    fill: #c3c5c4;
}
.quote-text path {
    fill: none;
    stroke: #c3c5c4;
    stroke-width: 2;
}
```
